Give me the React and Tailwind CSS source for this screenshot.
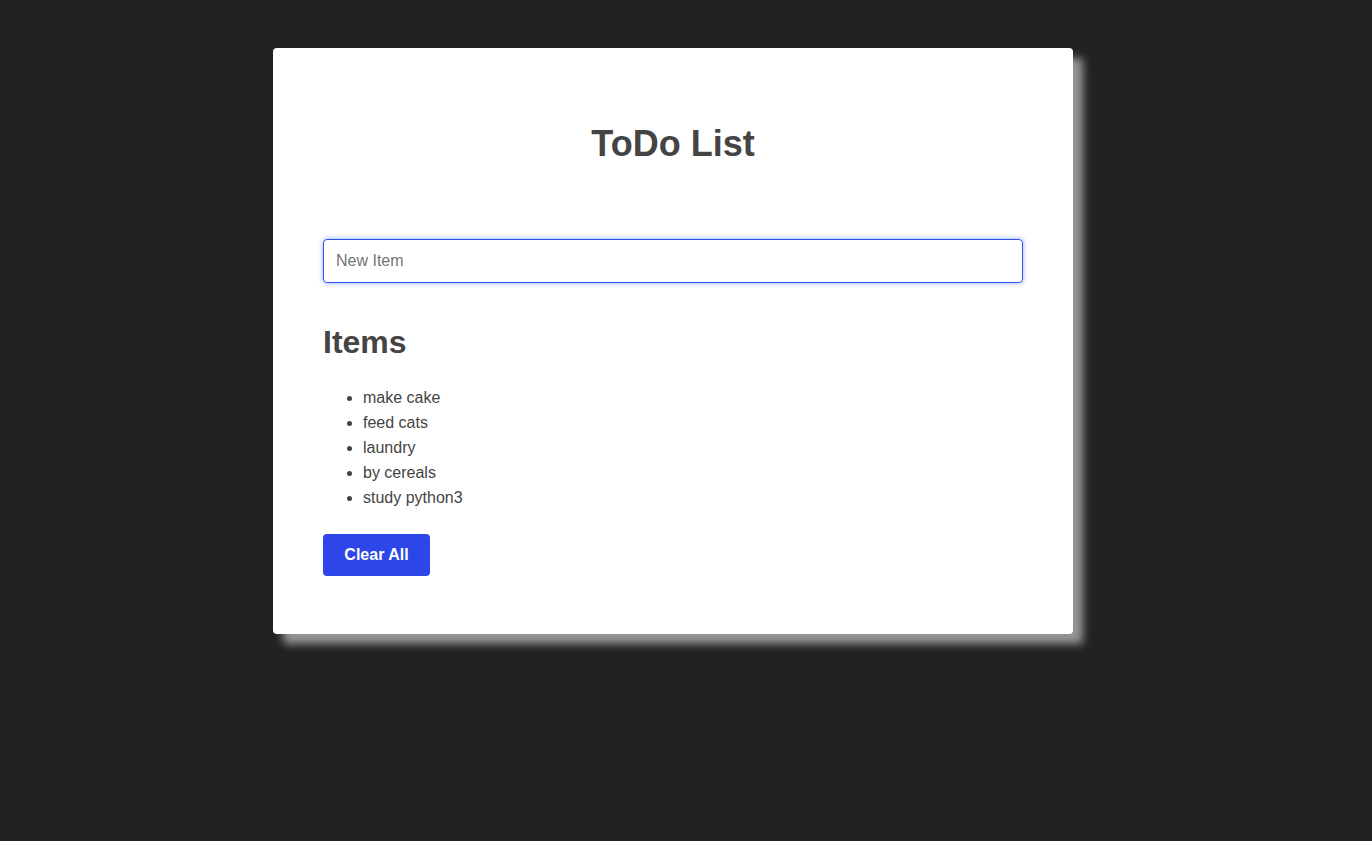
import React, { useState } from 'react';

const initialItems = ['make cake', 'feed cats', 'laundry', 'by cereals', 'study python3'];

export default function App() {
  const [items, setItems] = useState(initialItems);
  const [text, setText] = useState('');

  const addItem = (e) => {
    e.preventDefault();
    if (!text.trim()) return;
    setItems([...items, text.trim()]);
    setText('');
  };

  return (
    <div className="min-h-[841px] bg-[#222222] pt-[48px] font-['Liberation_Sans',Arial,sans-serif] text-[#444444]">
      <div className="ml-[273px] w-[800px] rounded-[4px] bg-white px-[50px] pt-[50px] pb-[58px] shadow-[10px_10px_8px_#969696]">
        <h1 className="mt-[25px] mb-[75px] text-center text-[36px] font-bold leading-[41px]">ToDo List</h1>

        <form onSubmit={addItem}>
          <input
            autoFocus
            value={text}
            onChange={e => setText(e.target.value)}
            placeholder="New Item"
            className="block h-[44px] w-full rounded-[4px] border border-[#2f52ee] px-[12px] text-[16px] text-[#444] caret-black shadow-[0_0_4px_1px_rgba(60,110,255,0.4)] outline-none placeholder:text-[#757575]"
          />
        </form>

        <h2 className="mt-[41px] mb-[24px] text-[32px] font-bold leading-[37px]">Items</h2>

        <ul className="list-disc pl-[40px] text-[16px] leading-[25px]">
          {items.map((item, i) => (
            <li key={i}>{item}</li>
          ))}
        </ul>

        <button
          onClick={() => setItems([])}
          className="mt-[24px] h-[42px] w-[107px] rounded-[4px] bg-[#2c46e8] text-[16px] font-bold text-white"
        >
          Clear All
        </button>
      </div>
    </div>
  );
}
